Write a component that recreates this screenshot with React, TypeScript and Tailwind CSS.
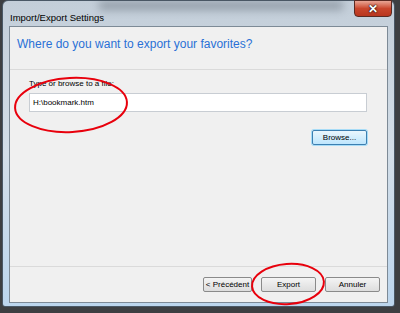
import React from 'react'

function WinButton({ children, focused, w = 'w-[55px]' }: { children: React.ReactNode; focused?: boolean; w?: string }) {
  return (
    <button
      className={
        w +
        ' h-[15px] rounded-[2px] border text-[8px] leading-none text-black flex items-center justify-center whitespace-nowrap overflow-hidden ' +
        (focused
          ? 'border-[#3c7fb1] bg-gradient-to-b from-[#eaf6fd] to-[#bee6fd] shadow-[0_0_0_1px_#a8dcf7]'
          : 'border-[#8a8a8a] bg-gradient-to-b from-[#f4f4f4] to-[#dddddd]')
      }
      style={{ fontFamily: '"Liberation Sans", Arial, sans-serif' }}
    >
      {children}
    </button>
  )
}

export default function App() {
  return (
    <div
      className="w-[400px] h-[313px] bg-[#3d3f42] overflow-hidden relative"
      style={{ fontFamily: '"Liberation Sans", Arial, sans-serif' }}
    >
      {/* Aero window */}
      <div className="ml-[2px] w-[393px] h-[307px] rounded-t-[6px] rounded-b-[3px] border border-[#4a5866] bg-gradient-to-b from-[#c3ced9] via-[#d3dee8] to-[#bcd6ee] flex flex-col px-[6px] pb-[3px]">
        {/* Title bar */}
        <div className="h-[25px] flex justify-between relative">
          <div className="absolute left-[90px] right-[45px] top-0 h-[9px] bg-[#4c5560] opacity-40 blur-[4px]" />
          <span className="relative text-[9.5px] text-black pl-[1px] pt-[10px]">Import/Export Settings</span>
          <div className="relative -mr-[4px] w-[38px] h-[17px] -mt-px rounded-b-[4px] border border-[#5a2a22] bg-gradient-to-b from-[#e8a595] via-[#c9462c] to-[#b8361f] flex items-center justify-center">
            <span className="text-white text-[12px] font-bold leading-none [text-shadow:0_0_1px_#000,0_0_2px_#000]">✕</span>
          </div>
        </div>

        {/* Client area */}
        <div className="flex-1 border border-[#7d8a96] bg-[#f0f0f0] flex flex-col">
          <div className="h-[43px] flex items-start pt-[8px] pl-[7px] border-b border-[#dadada]">
            <span className="text-[12px] text-[#2a70d6]">Where do you want to export your favorites?</span>
          </div>

          <div className="flex-1 flex flex-col pl-[19px] pr-[20px] pt-[8px] border-b border-[#dadada]">
            <span className="text-[8px] text-black leading-[12px]">Type or browse to a file:</span>
            <div className="mt-[3px] h-[19px] border border-[#c8cdd3] bg-white flex items-center pl-[3px]">
              <span className="text-[8px] text-black">H:\bookmark.htm</span>
            </div>
            <div className="mt-[18px] flex justify-end">
              <WinButton focused>Browse...</WinButton>
            </div>
          </div>

          <div className="h-[35px] flex items-center justify-end gap-[9px] pr-[7px]">
            <WinButton w="w-[49px]">&lt; Précédent</WinButton>
            <WinButton>Export</WinButton>
            <WinButton>Annuler</WinButton>
          </div>
        </div>
      </div>

      {/* Red annotation ellipses */}
      <svg className="absolute inset-0 pointer-events-none" width="400" height="313">
        <ellipse cx="71" cy="105" rx="56" ry="27" fill="none" stroke="#e8000c" strokeWidth="2" transform="rotate(-3 71 105)" />
        <ellipse cx="288" cy="284" rx="36" ry="20" fill="none" stroke="#e8000c" strokeWidth="2" transform="rotate(-4 288 284)" />
      </svg>
    </div>
  )
}
